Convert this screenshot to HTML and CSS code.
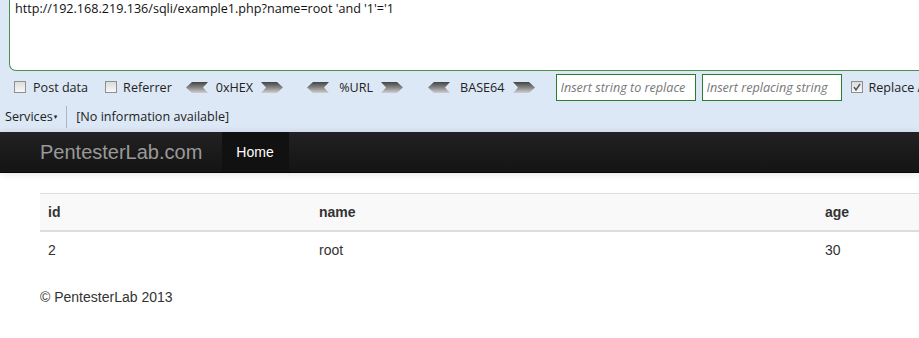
FILE: index.html
```html
<!DOCTYPE html>
<html>
  <head>
    <title>SQL injections - Example 1</title>
    <link rel="stylesheet" href="styles.css">
  </head>

  <body>
    <div class="hackbar">
      <div class="url-wrap">
        <div class="url-box">http://192.168.219.136/sqli/example1.php?name=root 'and '1'='1</div>
      </div>

      <div class="tools">
        <label class="check"><span class="box"></span>Post data</label>
        <label class="check referrer"><span class="box"></span>Referrer</label>

        <div class="codec hex">
          <svg class="arrow" width="22" height="11" viewBox="0 0 22 11"><polygon points="0,5.5 6,0 22,0 17,5.5 22,11 6,11" fill="url(#grad)"/></svg>
          <span class="codec-label">0xHEX</span>
          <svg class="arrow" width="22" height="11" viewBox="0 0 22 11"><polygon points="0,0 16,0 22,5.5 16,11 0,11 5,5.5" fill="url(#grad)"/></svg>
        </div>
        <div class="codec url">
          <svg class="arrow" width="22" height="11" viewBox="0 0 22 11"><polygon points="0,5.5 6,0 22,0 17,5.5 22,11 6,11" fill="url(#grad)"/></svg>
          <span class="codec-label">%URL</span>
          <svg class="arrow" width="22" height="11" viewBox="0 0 22 11"><polygon points="0,0 16,0 22,5.5 16,11 0,11 5,5.5" fill="url(#grad)"/></svg>
        </div>
        <div class="codec b64">
          <svg class="arrow" width="22" height="11" viewBox="0 0 22 11"><polygon points="0,5.5 6,0 22,0 17,5.5 22,11 6,11" fill="url(#grad)"/></svg>
          <span class="codec-label">BASE64</span>
          <svg class="arrow" width="22" height="11" viewBox="0 0 22 11"><polygon points="0,0 16,0 22,5.5 16,11 0,11 5,5.5" fill="url(#grad)"/></svg>
        </div>

        <input class="replace-input first" type="text" placeholder="Insert string to replace">
        <input class="replace-input" type="text" placeholder="Insert replacing string">

        <label class="check replace-all"><span class="box checked">
          <svg width="10" height="10" viewBox="0 0 10 10"><path d="M2 5 L4 8 L8 2" fill="none" stroke="#555" stroke-width="1.4"/></svg>
        </span>Replace All</label>

        <svg width="0" height="0" class="defs">
          <defs>
            <linearGradient id="grad" x1="0" y1="0" x2="0" y2="1">
              <stop offset="0" stop-color="#444"/>
              <stop offset="0.5" stop-color="#858585"/>
              <stop offset="1" stop-color="#cfcfcf"/>
            </linearGradient>
          </defs>
        </svg>
      </div>

      <div class="status">
        <span class="services">Services<span class="caret">&#9662;</span></span>
        <span class="sep"></span>
        <span class="info">[No information available]</span>
      </div>
    </div>

    <div class="navbar">
      <span class="brand">PentesterLab.com</span>
      <span class="nav-item active">Home</span>
    </div>

    <div class="container">
      <table class="table">
        <thead>
          <tr>
            <th class="col-id">id</th>
            <th class="col-name">name</th>
            <th>age</th>
          </tr>
        </thead>
        <tbody>
          <tr>
            <td>2</td>
            <td>root</td>
            <td>30</td>
          </tr>
        </tbody>
      </table>

      <footer class="footer">&copy; PentesterLab 2013</footer>
    </div>
  </body>

</html>
```

FILE: styles.css
```css
body {
  margin: 0;
  overflow: hidden;
  background: white;
  font-family: "Liberation Sans", Arial, sans-serif;
  color: #333;
}

/* hackbar toolbar */
.hackbar {
  height: 132px;
  background: #dce8f6;
  font-family: "Open Sans", "DejaVu Sans", sans-serif;
  font-size: 12.6px;
  color: #222;
}

.url-wrap {
  padding-left: 9px;
}

.url-box {
  width: 1000px;
  height: 71px;
  box-sizing: border-box;
  padding: 0 5px;
  background: white;
  border: 1px solid #4b8f4b;
  border-top: none;
  border-radius: 0 0 0 7px;
  font-size: 12.6px;
  line-height: 17px;
  color: #111;
}

.tools {
  height: 32px;
  display: flex;
  align-items: center;
  padding-left: 14px;
  white-space: nowrap;
}

.check {
  display: flex;
  align-items: center;
  gap: 7px;
}

.box {
  width: 12px;
  height: 12px;
  box-sizing: border-box;
  border: 1px solid #8e8f8f;
  background: linear-gradient(#dcdcdc, #f8f8f8);
  display: flex;
  align-items: center;
  justify-content: center;
}

.referrer {
  margin-left: 17px;
  gap: 6px;
}

.codec {
  display: flex;
  align-items: center;
  gap: 8px;
}

.hex {
  margin-left: 14px;
}

.url {
  margin-left: 24px;
}

.b64 {
  margin-left: 25px;
}

.url .codec-label,
.b64 .codec-label {
  margin-left: 2px;
}

.defs {
  position: absolute;
}

.replace-input {
  width: 140px;
  height: 27px;
  box-sizing: border-box;
  margin-left: 6px;
  padding: 0 4px;
  border: 1px solid #2a7d2a;
  background: white;
  font-family: "Open Sans", "DejaVu Sans", sans-serif;
  font-size: 12.6px;
  outline: none;
}

.replace-input.first {
  margin-left: 21px;
}

.replace-input::placeholder {
  color: #777;
  font-style: italic;
}

.replace-all {
  margin-left: 9px;
  gap: 6px;
}

.status {
  height: 27px;
  display: flex;
  align-items: center;
  padding-left: 5px;
}

.caret {
  font-size: 7px;
  margin-left: 1px;
  position: relative;
  top: -2px;
}

.sep {
  width: 1px;
  height: 22px;
  background: #a8b8c8;
  margin: 0 9px 0 9px;
}

/* site navbar */
.navbar {
  height: 40px;
  display: flex;
  align-items: stretch;
  padding-left: 40px;
  background: linear-gradient(#232123, #141414);
  border-bottom: 1px solid #060606;
  box-shadow: 0 1px 8px rgba(0, 0, 0, 0.12);
}

.brand {
  display: flex;
  align-items: center;
  margin-right: 20px;
  font-size: 20px;
  color: #999;
}

.nav-item {
  display: flex;
  align-items: center;
  padding: 0 15px 0 14px;
  font-size: 14px;
  color: white;
}

.nav-item.active {
  background: #111;
}

.container {
  padding: 20px 0 0 40px;
}

.table {
  width: 1000px;
  border-collapse: collapse;
  font-size: 14px;
  line-height: 20px;
}

.table th,
.table td {
  padding: 8px;
  text-align: left;
}

.table thead th {
  background: #f9f9f9;
  border-top: 1px solid #ddd;
  border-bottom: 2px solid #ddd;
  font-weight: bold;
  color: #333;
}

.col-id {
  width: 255px;
}

.col-name {
  width: 490px;
}

.footer {
  margin-top: 19px;
  font-size: 14px;
  line-height: 20px;
}
```
